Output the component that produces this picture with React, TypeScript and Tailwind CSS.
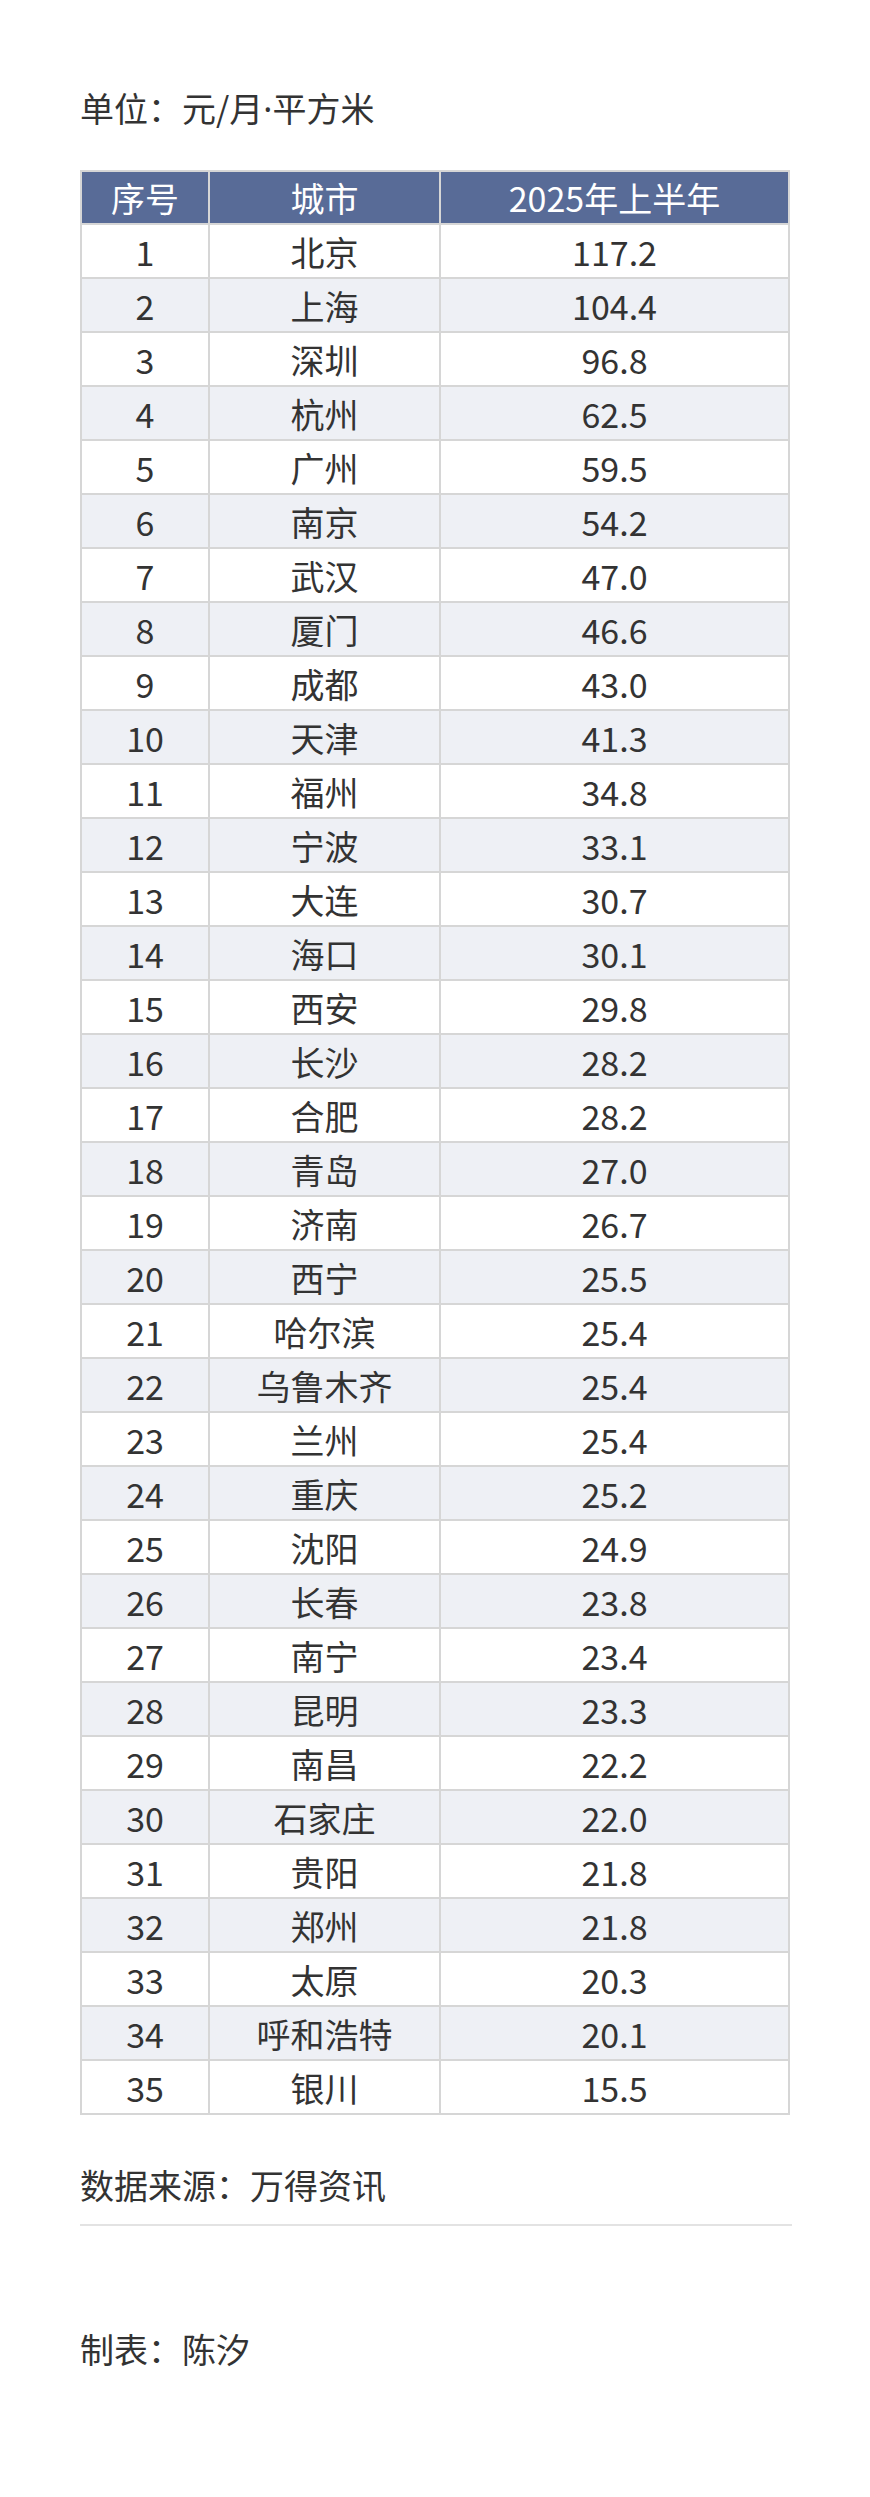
const rows: [string, string][] = [
  ["北京", "117.2"],
  ["上海", "104.4"],
  ["深圳", "96.8"],
  ["杭州", "62.5"],
  ["广州", "59.5"],
  ["南京", "54.2"],
  ["武汉", "47.0"],
  ["厦门", "46.6"],
  ["成都", "43.0"],
  ["天津", "41.3"],
  ["福州", "34.8"],
  ["宁波", "33.1"],
  ["大连", "30.7"],
  ["海口", "30.1"],
  ["西安", "29.8"],
  ["长沙", "28.2"],
  ["合肥", "28.2"],
  ["青岛", "27.0"],
  ["济南", "26.7"],
  ["西宁", "25.5"],
  ["哈尔滨", "25.4"],
  ["乌鲁木齐", "25.4"],
  ["兰州", "25.4"],
  ["重庆", "25.2"],
  ["沈阳", "24.9"],
  ["长春", "23.8"],
  ["南宁", "23.4"],
  ["昆明", "23.3"],
  ["南昌", "22.2"],
  ["石家庄", "22.0"],
  ["贵阳", "21.8"],
  ["郑州", "21.8"],
  ["太原", "20.3"],
  ["呼和浩特", "20.1"],
  ["银川", "15.5"],
];

const App = () => {
  return (
    <div
      className="min-h-[2497px] bg-white px-[80px] pt-[82px] text-[34px] leading-[51px] text-[#333333]"
      style={{ fontFamily: '"Noto Sans CJK SC", "Noto Sans", sans-serif' }}
    >
      <p className="h-[51px] overflow-hidden">
        单位：元/月
        <span style={{ fontFamily: '"Noto Sans", sans-serif' }}>·</span>
        平方米
      </p>

      <table className="mt-[37px] w-[710px] table-fixed border-collapse text-center">
        <colgroup>
          <col className="w-[128px]" />
          <col className="w-[231px]" />
          <col />
        </colgroup>
        <thead>
          <tr className="h-[53px] bg-[#586b97] text-white">
            <th className="border-2 border-[#d6d6d6] p-0 font-normal">序号</th>
            <th className="border-2 border-[#d6d6d6] p-0 font-normal">城市</th>
            <th className="border-2 border-[#d6d6d6] p-0 font-normal">2025年上半年</th>
          </tr>
        </thead>
        <tbody>
          {rows.map(([city, value], i) => {
            return (
              <tr
                key={city + i}
                className={`h-[54px] ${i % 2 === 1 ? "bg-[#eef0f5]" : "bg-white"}`}
              >
                <td className="border-2 border-[#d6d6d6] p-0">{i + 1}</td>
                <td className="border-2 border-[#d6d6d6] p-0">{city}</td>
                <td className="border-2 border-[#d6d6d6] p-0">{value}</td>
              </tr>
            );
          })}
        </tbody>
      </table>

      <p className="mt-[44px]">数据来源：万得资讯</p>
      <div className="mt-[14px] h-[2px] w-[712px] bg-[#e3e3e3]" />
      <p className="mt-[97px]">制表：陈汐</p>
    </div>
  );
};

export default App;
